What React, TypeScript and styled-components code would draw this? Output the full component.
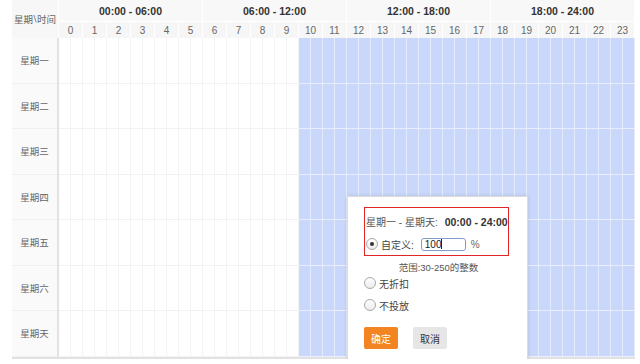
import styled, { createGlobalStyle } from "styled-components";

const GlobalStyle = createGlobalStyle`
  html, body {
    margin: 0;
    padding: 0;
    overflow: hidden;
    background: #ffffff;
  }
  body {
    font-family: "Liberation Sans", "Noto Sans CJK SC", sans-serif;
    color: #555555;
  }
`;

const Scheduler = styled.div`
  position: relative;
  margin-left: 12px;
  width: 623px;
`;

const Head = styled.div`
  display: grid;
  grid-template-columns: 47px repeat(24, 24px);
  grid-template-rows: 22px 16px;
  background: #ffffff;
`;

const Corner = styled.div`
  grid-row: 1 / span 2;
  display: flex;
  align-items: center;
  justify-content: center;
  background: #f7f7f7;
  border-right: 1px solid #ffffff;
  font-size: 9.5px;
  color: #666666;
  white-space: nowrap;
`;

const Slash = styled.span`
  font-family: "DejaVu Sans", sans-serif;
  font-size: 9px;
  color: #666666;
  margin: 0 0.5px;
`;

const Group = styled.div`
  grid-column: span 6;
  display: flex;
  align-items: center;
  justify-content: center;
  background: #f8f8f8;
  border-right: 1px solid #ffffff;
  border-bottom: 1px solid #ffffff;
  font-size: 10.5px;
  font-weight: 700;
  color: #333333;
`;

const Hour = styled.div`
  display: flex;
  align-items: center;
  justify-content: center;
  background: #f6f6f6;
  border-right: 1px solid #ffffff;
  font-size: 10px;
  color: #666666;
`;

const Body = styled.div`
  border-bottom: 2px solid #e2e2e2;
`;

const Row = styled.div`
  display: flex;
  height: 45.5px;
`;

const DayLabel = styled.div`
  width: 45px;
  display: flex;
  align-items: center;
  justify-content: center;
  background: #fafafa;
  border-bottom: 1px solid #f0f0f0;
  font-size: 9.5px;
  color: #666666;
`;

const Track = styled.div`
  display: flex;
  border-left: 2px solid #e2e2e2;
`;

const Slot = styled.div<{ $on: boolean }>`
  width: 12px;
  box-sizing: border-box;
  background: ${(p) => (p.$on ? "#c8d7fa" : "#ffffff")};
  border-right: 1px solid ${(p) => (p.$on ? "#e3ebfd" : "#f4f4f4")};
  border-bottom: 1px solid ${(p) => (p.$on ? "#e8eefd" : "#f2f2f2")};
`;

const Popup = styled.div`
  position: absolute;
  left: 335px;
  top: 196px;
  width: 181px;
  height: 190px;
  box-sizing: border-box;
  padding: 10px 0 0 16px;
  background: #ffffff;
  border: 1px solid #dcdcdc;
  box-shadow: 0 0 4px rgba(0, 0, 0, 0.12);
  white-space: nowrap;
`;

const Highlight = styled.div`
  width: 145px;
  height: 49px;
  box-sizing: border-box;
  border: 1px solid #e02626;
  padding: 6px 0 0 1px;
`;

const RangeLine = styled.div`
  display: flex;
  align-items: center;
  gap: 7px;
  font-size: 10px;
  color: #555555;
`;

const Strong = styled.span`
  font-size: 10.5px;
  font-weight: 700;
  color: #333333;
`;

const Option = styled.div<{ $gap?: number }>`
  display: flex;
  align-items: center;
  height: 14px;
  margin-top: ${(p) => p.$gap ?? 0}px;
  font-size: 10px;
  color: #444444;
`;

const Radio = styled.span<{ $checked?: boolean }>`
  position: relative;
  flex-shrink: 0;
  width: 12px;
  height: 12px;
  box-sizing: border-box;
  border-radius: 50%;
  border: 1px solid #a8a8a8;
  background: linear-gradient(#ffffff, #ececec);
  margin-right: 3px;

  &::after {
    content: "";
    display: ${(p) => (p.$checked ? "block" : "none")};
    position: absolute;
    left: 3px;
    top: 3px;
    width: 4px;
    height: 4px;
    border-radius: 50%;
    background: #333333;
  }
`;

const Input = styled.div`
  flex-shrink: 0;
  width: 45px;
  height: 13px;
  box-sizing: border-box;
  margin-left: 7px;
  padding: 0 3px;
  border: 1px solid #7f9ccb;
  border-radius: 3px;
  font-size: 10px;
  line-height: 11px;
  color: #222222;
  display: flex;
  align-items: center;
`;

const Caret = styled.span`
  width: 1px;
  height: 10px;
  background: #222222;
`;

const Percent = styled.span`
  margin-left: 5px;
  font-size: 10px;
  color: #666666;
`;

const Hint = styled.div`
  margin: 4px 0 0 -16px;
  width: 181px;
  text-align: center;
  font-size: 9.5px;
  color: #555555;
`;

const Buttons = styled.div`
  display: flex;
  gap: 15px;
  margin-top: 15px;
`;

const Button = styled.button<{ $primary?: boolean }>`
  height: 22px;
  padding: 0 7px;
  border: none;
  border-radius: 2px;
  font-family: inherit;
  font-size: 10px;
  color: ${(p) => (p.$primary ? "#ffffff" : "#333333")};
  background: ${(p) => (p.$primary ? "#f28522" : "#e6e6e6")};
`;

const days = ["星期一", "星期二", "星期三", "星期四", "星期五", "星期六", "星期天"];
const groups = ["00:00 - 06:00", "06:00 - 12:00", "12:00 - 18:00", "18:00 - 24:00"];
const hours = Array.from({ length: 24 }, (_, i) => i);
const halves = Array.from({ length: 48 }, (_, i) => i);

export default function App() {
  return (
    <>
      <GlobalStyle />
      <Scheduler>
        <Head>
          <Corner>
            星期<Slash>{"\\"}</Slash>时间
          </Corner>
          {groups.map((g) => (
            <Group key={g}>{g}</Group>
          ))}
          {hours.map((h) => (
            <Hour key={h}>{h}</Hour>
          ))}
        </Head>
        <Body>
          {days.map((d) => (
            <Row key={d}>
              <DayLabel>{d}</DayLabel>
              <Track>
                {halves.map((i) => (
                  <Slot key={i} $on={i >= 20} />
                ))}
              </Track>
            </Row>
          ))}
        </Body>

        <Popup>
          <Highlight>
            <RangeLine>
              <span>星期一 - 星期天:</span>
              <Strong>00:00 - 24:00</Strong>
            </RangeLine>
            <Option $gap={8}>
              <Radio $checked />
              自定义:
              <Input>
                100
                <Caret />
              </Input>
              <Percent>%</Percent>
            </Option>
          </Highlight>
          <Hint>范围:30-250的整数</Hint>
          <Option $gap={2}>
            <Radio />
            无折扣
          </Option>
          <Option $gap={8}>
            <Radio />
            不投放
          </Option>
          <Buttons>
            <Button $primary>确定</Button>
            <Button>取消</Button>
          </Buttons>
        </Popup>
      </Scheduler>
    </>
  );
}
